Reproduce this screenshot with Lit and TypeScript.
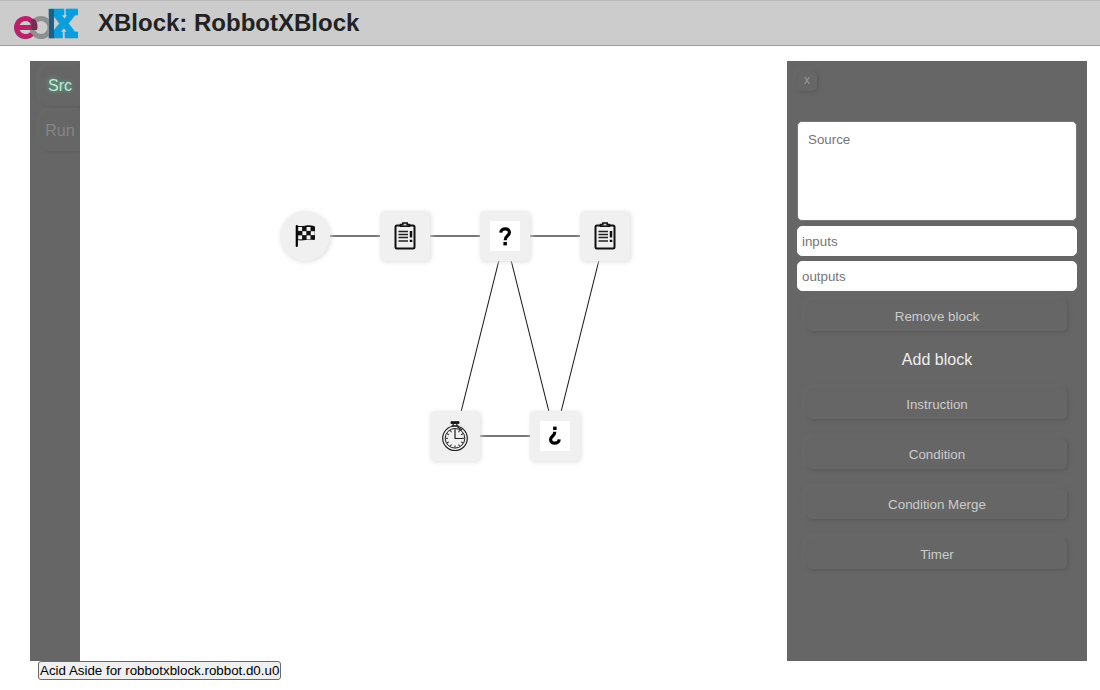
import { LitElement, html, svg, css } from "lit";
import { customElement, state } from "lit/decorators.js";

type Kind = "start" | "instruction" | "condition" | "merge" | "timer";
interface Block { id: string; kind: Kind; x: number; y: number; }

const BLOCKS: Block[] = [
  { id: "start", kind: "start", x: 225, y: 175 },
  { id: "i1", kind: "instruction", x: 325, y: 175 },
  { id: "c1", kind: "condition", x: 425, y: 175 },
  { id: "i2", kind: "instruction", x: 525, y: 175 },
  { id: "t1", kind: "timer", x: 375, y: 375 },
  { id: "m1", kind: "merge", x: 475, y: 375 },
];

const LINKS: [number, number, number, number][] = [
  [225, 175, 325, 175],
  [325, 175, 425, 175],
  [425, 175, 525, 175],
  [375, 375, 475, 375],
  [425, 175, 375, 375],
  [425, 175, 475, 375],
  [525, 175, 475, 375],
];

const WHITE_CELLS = [[0, 0], [2, 0], [1, 1], [3, 1], [0, 2], [2, 2]];
const TICKS = [0, 30, 60, 90, 120, 150, 180, 210, 240, 270, 300, 330];

const icons: Record<Kind, unknown> = {
  start: svg`
    <path d="M6.8 5v20" stroke="#000" stroke-width="2.2" stroke-linecap="round"/>
    <path d="M7 4.700c3 .5 5 .6 8 0s6-.6 9 .2q1 .3 1 1.300V18q0 1.200-1.200 1.100c-3-.6-5-.6-8-.1s-6 .6-8.800.1z" fill="#111"/>
    ${WHITE_CELLS.map(([c, r]) => svg`<rect x=${8.2 + c * 4.2} y=${6 + r * 4.2} width="3.9" height="3.9" fill="#f6f6f6"/>`)}`,
  instruction: svg`
    <rect x="5.5" y="4.5" width="19" height="23" rx="1.5" fill="#f0f0f0" stroke="#111" stroke-width="2"/>
    <path d="M10.5 5.200V3.500h2.300V2h4.400v1.500h2.300v1.700z" fill="#ccc" stroke="#111" stroke-width="1.500"/>
    <path d="M8.500 10.500h9.500M8.500 13.500h9.500M8.500 16.500h9.500M8.500 20h9.500" stroke="#222" stroke-width="1.700"/>
    <path d="M21 10v6.500M21 18.700v2.300" stroke="#111" stroke-width="2.500"/>`,
  condition: svg`
    <rect width="30" height="30" fill="#fff"/>
    <path d="M10.800 11.600C11 6.500 19.600 6.600 19.400 11.600c-.2 3.400-4.200 3.100-4.200 7.600" fill="none" stroke="#000" stroke-width="3.200"/>
    <path d="M13.400 21h3.500v3.400h-3.500z"/>`,
  merge: svg`
    <rect width="30" height="30" fill="#fff"/>
    <path d="M19.200 18.400C19 23.500 10.400 23.400 10.600 18.400c.2-3.400 4.200-3.100 4.200-7.600" fill="none" stroke="#000" stroke-width="3.200"/>
    <path d="M13.100 5.600h3.500V9h-3.500z"/>`,
  timer: svg`
    <g fill="none" stroke="#222">
      <circle cx="15" cy="17.300" r="12.300" stroke-width="1.200"/>
      <circle cx="15" cy="17.300" r="9.800" stroke-width="1"/>
      <path d="M11 .7h8v1.800h-8z" fill="#111"/>
      <path d="M13.200 3v2.500M16.800 3v2.500M11.500 4.800h7" stroke-width="1.200"/>
      <path d="M15 9.500v8h7.500" stroke-width="1.200"/>
      ${TICKS.map((a) => svg`<path d="M15 8v2.200" transform="rotate(${a} 15 17.3)"/>`)}
      <path d="M17.500 6l4.500 3" stroke-width="1.400"/>
    </g>`,
};

@customElement("app-root")
export class AppRoot extends LitElement {
  @state() private mode = "Src";

  static styles = css`
    :host { display: block; font-family: "Liberation Sans", Arial, sans-serif; font-size: 16px; color: #222; }
    * { box-sizing: border-box; }
    button, input, textarea { font-family: inherit; }
    header { display: flex; align-items: center; gap: 20px; height: 46px; padding: 0 14px; background: #ccc; border-top: 1px solid #bbb; border-bottom: 1px solid #999; }
    .logo { display: block; width: 64px; height: 32px; }
    h1 { margin: 0; font-size: 24px; line-height: 28px; }
    main { display: flex; min-height: 600px; margin: 15px 13px 0 30px; }
    .tabs { display: flex; flex-direction: column; gap: 5px; width: 50px; padding: 5px 0 0 10px; background: #666; overflow: hidden; }
    .tab { height: 40px; padding: 0; border: 0; border-radius: 10px 0 0 10px; background: #666; color: #858585; font-size: 16px; box-shadow: 1px 1px 3px #5c5c5c, -2px -2px 4px #6c6c6c; }
    .tab.active { color: #b8eed8; text-shadow: 0 0 5px #62c89c; }
    .canvas { position: relative; flex: 1; overflow: hidden; }
    .links { display: block; width: 100%; height: 100%; }
    .node { position: absolute; display: grid; place-items: center; width: 50px; height: 50px; padding: 0; border: 0; border-radius: 5px; background: #f0f0f0; box-shadow: 1px 1px 5px #ddd; transform: translate(-50%, -50%); }
    .node.start { border-radius: 50%; }
    .node svg { display: block; width: 30px; height: 30px; }
    .panel { display: flex; flex-direction: column; width: 300px; padding: 10px; background: #666; }
    .raised { border: 0; border-radius: 5px; background: #666; color: #ccc; box-shadow: 1px 1px 4px #585858, -3px -3px 4px #6b6b6b; }
    .close { width: 20px; height: 20px; padding: 0 0 2px; color: #999; font-size: 12px; }
    .fields { display: flex; flex-direction: column; gap: 5px; margin-top: 30px; }
    .fields textarea, .fields input { display: block; width: 100%; border: 1px solid #fff; border-radius: 5px; background: #fff; outline: 0; }
    .fields textarea { height: 100px; padding: 10px; border-color: #777; resize: none; }
    .fields input { height: 30px; padding: 0 4px; }
    ::placeholder { color: #757575; }
    .wide { height: 30px; margin: 0 10px; }
    .remove { margin-top: 10px; }
    h2 { margin: 19px 0; color: #eee; font-size: 16px; font-weight: 400; line-height: 20px; text-align: center; }
    .adds { display: flex; flex-direction: column; gap: 20px; }
    .aside { display: block; margin: 0 0 0 38px; padding: 1px; border: 1px solid #6b6b6b; border-radius: 3px; background: #efefef; color: #000; line-height: 15px; }
  `;

  render() {
    return html`
      <header>
        <svg class="logo" viewBox="0 0 64 32" role="img" aria-label="edX">
          <path d="M35 2h15v6h-2.500l3 4 3-4H52V2h12v6h-3l-6.500 8.500L61 25h3v6H51v-6h2l-3-4-3.500 4h2v6H35v-6h3.500l7-8.500L39 8h-4z" fill="#0a9fdc" stroke="#0a9fdc" stroke-width=".6"/>
          <circle cx="27" cy="20.500" r="9" fill="none" stroke="#8c9092" stroke-width="5"/>
          <path d="M34.500 2H40v29.500h-5.500z" fill="#8c9092"/>
          <path d="M35 2h5v29h-5z" fill="#17618b"/>
          <path d="M3 20.500h17.500a9 9 0 1 0-2.600 6.400" fill="none" stroke="#b9216a" stroke-width="5"/>
          <path d="M19.800 11.500a11.500 11.500 0 0 1 3.200 11.500h-5a9 9 0 0 1 0-7.500l-1.600-1q1-1.800 3.400-3z" fill="#782a50"/>
        </svg>
        <h1>XBlock: RobbotXBlock</h1>
      </header>
      <main>
        <nav class="tabs">
          ${["Src", "Run"].map((t) => html`<button class="tab ${this.mode === t ? "active" : ""}" @click=${() => (this.mode = t)}>${t}</button>`)}
        </nav>
        <section class="canvas" aria-label="Program">
          <svg class="links">
            ${LINKS.map(([x1, y1, x2, y2]) => svg`<line x1=${x1} y1=${y1} x2=${x2} y2=${y2} stroke=${y1 === y2 ? "#777" : "#111"} stroke-width=${y1 === y2 ? 2 : 1}/>`)}
          </svg>
          ${BLOCKS.map((b) => html`<button class="node ${b.kind}" aria-label=${b.kind} style="left:${b.x}px;top:${b.y}px"><svg viewBox="0 0 30 30">${icons[b.kind]}</svg></button>`)}
        </section>
        <aside class="panel">
          <button class="raised close">x</button>
          <div class="fields">
            <textarea aria-label="Source" placeholder="Source"></textarea>
            <input aria-label="inputs" placeholder="inputs">
            <input aria-label="outputs" placeholder="outputs">
          </div>
          <button class="raised wide remove">Remove block</button>
          <h2>Add block</h2>
          <div class="adds">
            ${["Instruction", "Condition", "Condition Merge", "Timer"].map((t) => html`<button class="raised wide">${t}</button>`)}
          </div>
        </aside>
      </main>
      <button class="aside">Acid Aside for robbotxblock.robbot.d0.u0</button>
    `;
  }
}
